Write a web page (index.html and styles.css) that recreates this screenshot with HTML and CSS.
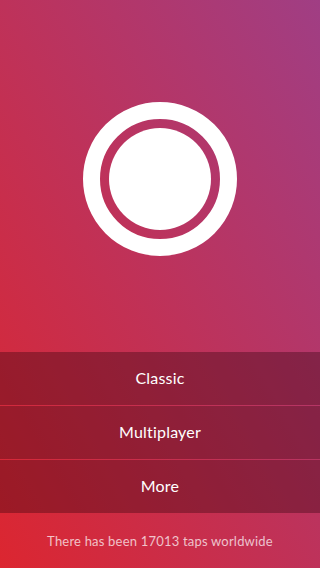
FILE: index.html
```html
<!DOCTYPE html>
<html>
<head>
<meta charset="utf-8">
<link rel="stylesheet" href="styles.css">
</head>
<body>
<div class="screen">
  <div class="hero">
    <svg class="button" width="154" height="154" viewBox="0 0 154 154">
      <circle cx="77" cy="77" r="68.5" fill="none" stroke="#fff" stroke-width="17"/>
      <circle cx="77" cy="77" r="51" fill="#fff"/>
    </svg>
  </div>
  <div class="menu">
    <div class="row">Classic</div>
    <div class="row">Multiplayer</div>
    <div class="row">More</div>
  </div>
  <div class="footer">There has been 17013 taps worldwide</div>
</div>
</body>
</html>
```
FILE: styles.css
```css
html, body {
  margin: 0;
  padding: 0;
}
body {
  font-family: Lato, "Noto Sans", sans-serif;
}
.screen {
  width: 320px;
  height: 568px;
  display: flex;
  flex-direction: column;
  background: linear-gradient(to top right, #dc2630 0%, #a03e84 100%);
  overflow: hidden;
}
.hero {
  height: 346px;
  padding-top: 6px;
  display: flex;
  align-items: center;
  justify-content: center;
}
.button {
  display: block;
}
.menu {
  display: flex;
  flex-direction: column;
  gap: 1px;
}
.row {
  height: 51px;
  padding-bottom: 2px;
  display: flex;
  align-items: center;
  justify-content: center;
  background: rgba(40, 0, 10, 0.34);
  color: #fff;
  font-size: 16px;
  letter-spacing: 0.2px;
}
.footer {
  flex: 1;
  display: flex;
  align-items: center;
  justify-content: center;
  color: rgba(255, 255, 255, 0.72);
  font-size: 13px;
  letter-spacing: 0.2px;
}
```
